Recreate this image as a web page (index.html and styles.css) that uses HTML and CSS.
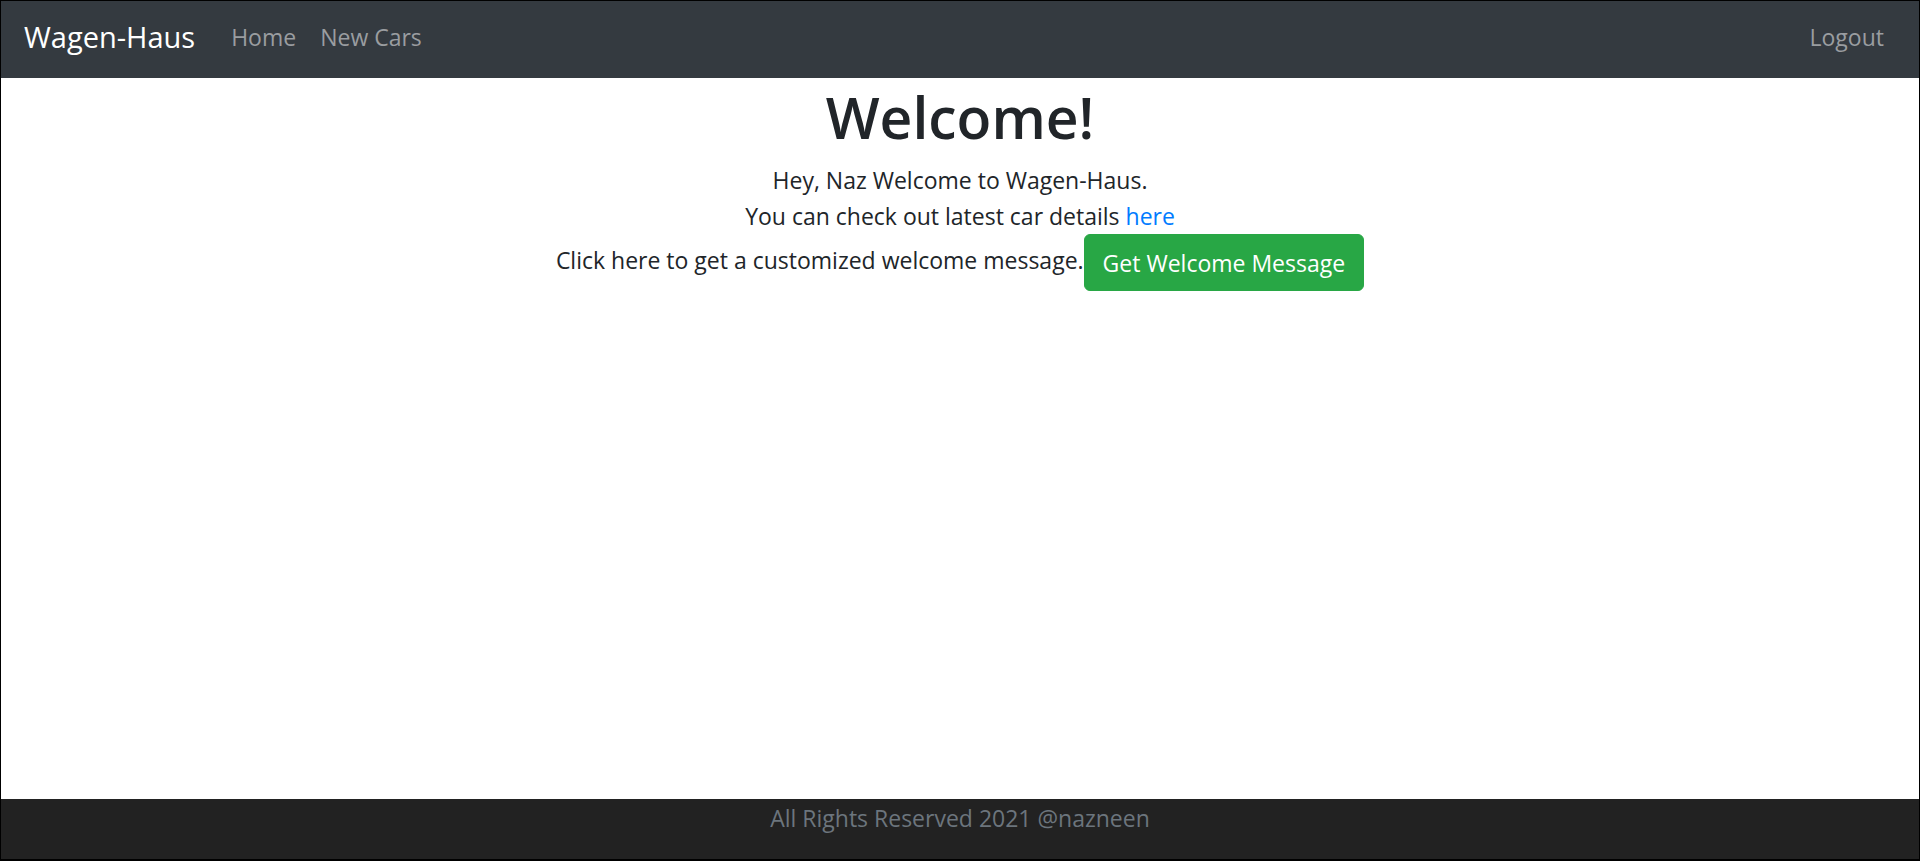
FILE: index.html
```html
<!DOCTYPE html>
<html lang="en">
<head>
<meta charset="utf-8">
<title>Wagen-Haus</title>
<link rel="stylesheet" href="styles.css">
</head>
<body>
<header>
<nav class="navbar">
<a class="brand" href="#">Wagen-Haus</a>
<ul class="nav-list">
<li><a class="nav-link" href="#">Home</a></li>
<li><a class="nav-link" href="#">New Cars</a></li>
</ul>
<ul class="nav-list nav-end">
<li><a class="nav-link" href="#">Logout</a></li>
</ul>
</nav>
</header>
<main class="content">
<h1 class="title">Welcome!</h1>
<p class="line">Hey, Naz Welcome to Wagen-Haus.</p>
<p class="line">You can check out latest car details <a class="link" href="#">here</a></p>
<div class="action"><span class="prompt">Click here to get a customized welcome message.</span><button class="btn" type="button">Get Welcome Message</button></div>
</main>
<footer class="footer"><span>All Rights Reserved 2021 @nazneen</span></footer>
</body>
</html>
```
FILE: styles.css
```css
* { box-sizing: border-box; }
body {
  margin: 0;
  min-height: 100vh;
  display: flex;
  flex-direction: column;
  border: 1px solid #000;
  border-bottom-width: 2px;
  background: #fff;
  color: #212529;
  font-family: "Segoe UI", "Open Sans", "Noto Sans", sans-serif;
  font-size: 23px;
  line-height: 36px;
}
a { text-decoration: none; }
.navbar {
  display: flex;
  align-items: center;
  padding: 12px 23px 17px;
  background: #343a40;
}
.brand { margin-right: 24px; color: #fff; font-size: 29px; }
.nav-list { display: flex; margin: 0; padding: 0; list-style: none; }
.nav-link { display: block; padding: 6px 12px; color: #9a9da0; }
.nav-end { margin-left: auto; }
.content { flex: 1; text-align: center; }
.title { margin: 3px 0 9px; font-size: 57px; line-height: 72px; font-weight: 600; }
.line { margin: 0; }
.link { color: #007bff; }
.action { display: flex; justify-content: center; align-items: center; }
.prompt { padding-bottom: 5px; }
.btn {
  padding: 10px 18px 9px;
  border: 1px solid #28a745;
  border-radius: 6px;
  background: #28a745;
  color: #fff;
  font: inherit;
}
.footer { min-height: 60px; padding-top: 1px; background: #222; color: #6c757d; text-align: center; }
```
